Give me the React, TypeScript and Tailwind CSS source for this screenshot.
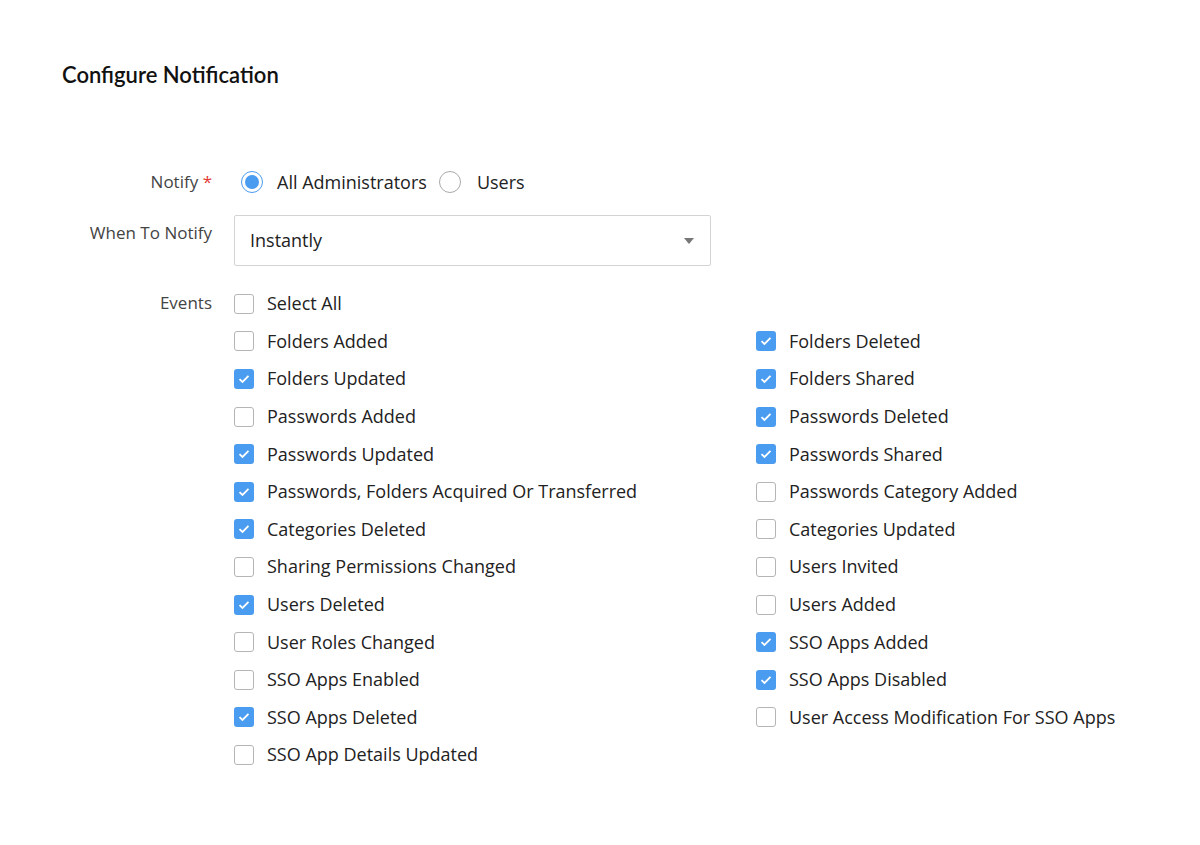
import { useState } from "react";

const left: [string, boolean][] = [
  ["Folders Added", false],
  ["Folders Updated", true],
  ["Passwords Added", false],
  ["Passwords Updated", true],
  ["Passwords, Folders Acquired Or Transferred", true],
  ["Categories Deleted", true],
  ["Sharing Permissions Changed", false],
  ["Users Deleted", true],
  ["User Roles Changed", false],
  ["SSO Apps Enabled", false],
  ["SSO Apps Deleted", true],
  ["SSO App Details Updated", false],
];

const right: [string, boolean][] = [
  ["Folders Deleted", true],
  ["Folders Shared", true],
  ["Passwords Deleted", true],
  ["Passwords Shared", true],
  ["Passwords Category Added", false],
  ["Categories Updated", false],
  ["Users Invited", false],
  ["Users Added", false],
  ["SSO Apps Added", true],
  ["SSO Apps Disabled", true],
  ["User Access Modification For SSO Apps", false],
];

function Check({ label, checked }: { label: string; checked: boolean }) {
  const [on, setOn] = useState(checked);
  return (
    <button className="flex items-center h-[37.6px] gap-[13px] text-left" onClick={() => setOn(!on)}>
      <span
        className={
          on
            ? "w-[20px] h-[20px] rounded-[3px] bg-[#4a9cf0] flex items-center justify-center"
            : "w-[20px] h-[20px] rounded-[3px] border border-[#b5b5b5] bg-white"
        }
      >
        {on && (
          <svg width="12" height="10" viewBox="0 0 12 10">
            <path d="M1.5 5.2 L4.5 8 L10.5 1.8" fill="none" stroke="white" strokeWidth="1.8" />
          </svg>
        )}
      </span>
      <span className="text-[18px] text-[#222]">{label}</span>
    </button>
  );
}

export default function App() {
  return (
    <div className="w-[1200px] h-[845px] bg-white pl-[62px] pt-[60px]" style={{ fontFamily: '"Open Sans", sans-serif' }}>
      <h1 className="text-[22px] font-semibold text-[#111] leading-[30px]" style={{ fontFamily: "Lato, sans-serif" }}>
        Configure Notification
      </h1>
      <div className="mt-[75px] flex flex-col">
        <div className="flex items-center h-[34px]">
          <div className="w-[150px] text-right text-[17px] text-[#444]">
            Notify <span className="text-[#e53935]">*</span>
          </div>
          <div className="ml-[29px] flex items-center">
            <span className="w-[22px] h-[22px] rounded-full border border-[#4a9cf0] flex items-center justify-center">
              <span className="w-[14px] h-[14px] rounded-full bg-[#4a9cf0]" />
            </span>
            <span className="ml-[14px] text-[18px] text-[#222]">All Administrators</span>
            <span className="ml-[12px] w-[22px] h-[22px] rounded-full border border-[#aaa]" />
            <span className="ml-[16px] text-[18px] text-[#222]">Users</span>
          </div>
        </div>
        <div className="flex mt-[16px]">
          <div className="w-[150px] text-right text-[17px] text-[#444] pt-[5px]">When To Notify</div>
          <div className="ml-[22px] w-[477px] h-[51px] border border-[#d4d4d4] rounded-[2px] flex items-center justify-between pl-[15px] pr-[16px]">
            <span className="text-[18px] text-[#222]">Instantly</span>
            <svg width="10" height="6" viewBox="0 0 10 6">
              <path d="M0 0 L10 0 L5 6 Z" fill="#777" />
            </svg>
          </div>
        </div>
        <div className="flex mt-[19px]">
          <div className="w-[150px] text-right text-[17px] text-[#444] pt-[5px]">Events</div>
          <div className="ml-[22px] flex flex-col">
            <Check label="Select All" checked={false} />
            <div className="flex">
              <div className="w-[522px] flex flex-col">
                {left.map(([l, c]) => (
                  <Check key={l} label={l} checked={c} />
                ))}
              </div>
              <div className="flex flex-col">
                {right.map(([l, c]) => (
                  <Check key={l} label={l} checked={c} />
                ))}
              </div>
            </div>
          </div>
        </div>
      </div>
    </div>
  );
}
